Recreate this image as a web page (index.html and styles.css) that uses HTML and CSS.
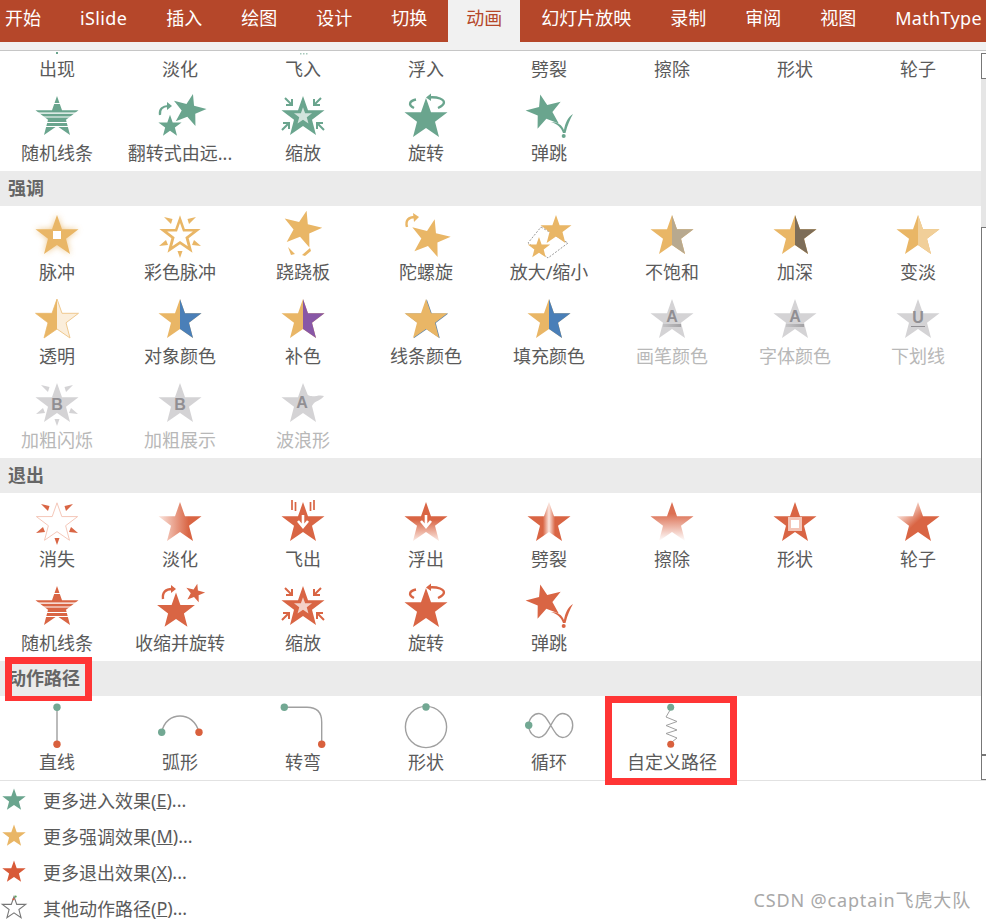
FILE: index.html
```html
<!DOCTYPE html>
<html lang="zh-CN">
<head>
    <meta charset="UTF-8">
    <title>动画</title>
    <link rel="stylesheet" href="styles.css">
</head>
<body>
<!-- shared shapes -->
<svg class="defs" aria-hidden="true">
    <defs>
        <path id="star" d="M22 1L27 15.3H43.5L31 24.8L35 40L22 31L9 40L13 24.8L.5 15.3H17Z"/>
        <clipPath id="rightHalf"><rect x="22" y="0" width="24" height="44"/></clipPath>
        <clipPath id="leftHalf"><rect x="0" y="0" width="22" height="44"/></clipPath>
        <linearGradient id="fadeX"><stop offset="0" stop-color="#fbe6df"/><stop offset=".7" stop-color="#d96544"/></linearGradient>
        <linearGradient id="fadeY" x2="0" y2="1"><stop offset=".3" stop-color="#dc7053"/><stop offset="1" stop-color="#fff"/></linearGradient>
        <linearGradient id="floatY" x2="0" y2="1"><stop offset=".45" stop-color="#d96544"/><stop offset="1" stop-color="#fbeae4"/></linearGradient>
        <linearGradient id="splitX"><stop offset=".36" stop-color="#d96544"/><stop offset=".5" stop-color="#fbe6df"/><stop offset=".64" stop-color="#d96544"/></linearGradient>
        <linearGradient id="wheel" x1="0" y1="0" x2="1" y2="1"><stop offset=".2" stop-color="#f8ddd4"/><stop offset=".5" stop-color="#d96544"/></linearGradient>
        <linearGradient id="barGrey"><stop offset="0" stop-color="#c4c3c5"/><stop offset="1" stop-color="#a3a2a5"/></linearGradient>
        <filter id="glow" x="-30%" y="-30%" width="160%" height="160%"><feGaussianBlur stdDeviation="3"/></filter>

        <g id="stripes">
            <use href="#star"/>
            <path d="M10 8.5H34M0 18.2H44M0 22H44M0 27.5H44M0 31.5H44" stroke="#fff" stroke-width="1.2"/>
        </g>
        <g id="squeeze">
            <use href="#star"/>
            <use href="#star" fill="#fff" fill-opacity=".7" transform="translate(22 21) scale(.42) translate(-22 -22)"/>
            <path d="M4 3L11 10M11 4V10H5M40 3L33 10M33 4V10H39M1 35L8 28M2 28H8V34M43 35L36 28M42 28H36V34" fill="none" stroke="currentColor" stroke-width="2"/>
        </g>
        <g id="spin">
            <use href="#star" transform="translate(0 2)"/>
            <path d="M12 4.5C5 6 4 10 10 13M34 13C41 10 42 6 36 3.5C32 2 28 2 24 2.5" fill="none" stroke="currentColor" stroke-width="2.4"/>
            <path d="M27 -1.5L22 2.5L27 6Z"/>
        </g>
        <g id="bounce">
            <use href="#star" transform="translate(17.5 16.5) rotate(-14) scale(.84) translate(-22 -22)"/>
            <path d="M24 27C31 27 35 30 37 35C38 28 41 22 46 19C43 24 40.5 30 38.5 38H36C34 32 30 29 24 27Z"/>
            <circle cx="36.7" cy="41" r="2"/>
        </g>
        <g id="ticks">
            <path d="M6 3L13 10L14.5 5ZM38 3L31 10L29.5 5ZM1 32L8 26L10 31ZM43 32L36 26L34 31ZM22 44L19.5 37H24.5Z"/>
        </g>
    </defs>
</svg>

<nav class="tabs">
    <a class="tab">开始</a>
    <a class="tab latin">iSlide</a>
    <a class="tab">插入</a>
    <a class="tab">绘图</a>
    <a class="tab">设计</a>
    <a class="tab">切换</a>
    <a class="tab active">动画</a>
    <a class="tab">幻灯片放映</a>
    <a class="tab">录制</a>
    <a class="tab">审阅</a>
    <a class="tab">视图</a>
    <a class="tab latin">MathType</a>
</nav>
<div class="strip"></div>

<div class="panel">
    <div class="gallery">
        <div class="gallery-inner">
            <!-- 进入 (scrolled partly out of view) -->
            <div class="grid green">
                <div class="item"><svg class="ico" viewBox="0 0 44 44"><rect x="21" y="41" width="2" height="2"/></svg><span>出现</span></div>
                <div class="item"><svg class="ico" viewBox="0 0 44 44"></svg><span>淡化</span></div>
                <div class="item"><svg class="ico" viewBox="0 0 44 44"><path d="M19 42h1.5v1.5H19zM22 42h1.5v1.5H22zM25 42h1.5v1.5H25z" opacity=".6"/></svg><span>飞入</span></div>
                <div class="item"><svg class="ico" viewBox="0 0 44 44"></svg><span>浮入</span></div>
                <div class="item"><svg class="ico" viewBox="0 0 44 44"></svg><span>劈裂</span></div>
                <div class="item"><svg class="ico" viewBox="0 0 44 44"></svg><span>擦除</span></div>
                <div class="item"><svg class="ico" viewBox="0 0 44 44"></svg><span>形状</span></div>
                <div class="item"><svg class="ico" viewBox="0 0 44 44"></svg><span>轮子</span></div>

                <div class="item"><svg class="ico" viewBox="0 0 44 44"><use href="#stripes"/></svg><span>随机线条</span></div>
                <div class="item"><svg class="ico" viewBox="0 0 44 44">
                    <use href="#star" transform="translate(31 15) rotate(14) scale(.78) translate(-22 -22)"/>
                    <use href="#star" transform="translate(12 31) scale(.54) translate(-22 -22)"/>
                    <path d="M2 20C1 14 5 11 10 11" fill="none" stroke="currentColor" stroke-width="2.2"/>
                    <path d="M9 7L14 11L9 15Z"/>
                </svg><span>翻转式由远...</span></div>
                <div class="item"><svg class="ico" viewBox="0 0 44 44"><use href="#squeeze"/></svg><span>缩放</span></div>
                <div class="item"><svg class="ico" viewBox="0 0 44 44"><use href="#spin"/></svg><span>旋转</span></div>
                <div class="item"><svg class="ico" viewBox="0 0 44 44"><use href="#bounce"/></svg><span>弹跳</span></div>
            </div>

            <h3 class="section-title">强调</h3>
            <div class="grid gold">
                <div class="item"><svg class="ico" viewBox="0 0 44 44">
                    <use href="#star" filter="url(#glow)" opacity=".75"/>
                    <use href="#star"/>
                    <rect x="18" y="17" width="8" height="8" fill="#fff"/>
                </svg><span>脉冲</span></div>
                <div class="item"><svg class="ico" viewBox="0 0 44 44">
                    <use href="#star" transform="translate(22 21.5) scale(.96) translate(-22 -22)"/>
                    <use href="#star" fill="#fff" transform="translate(22 21.5) scale(.6) translate(-22 -22)"/>
                    <use href="#ticks"/>
                </svg><span>彩色脉冲</span></div>
                <div class="item"><svg class="ico" viewBox="0 0 44 44">
                    <use href="#star" transform="translate(21 15) rotate(14) scale(.9) translate(-22 -22)"/>
                    <path d="M7 33L14 40L10 41ZM21 41L29 34L30 37L24 42Z"/>
                </svg><span>跷跷板</span></div>
                <div class="item"><svg class="ico" viewBox="0 0 44 44">
                    <use href="#star" transform="translate(26 24) rotate(14) scale(.92) translate(-22 -22)"/>
                    <path d="M3 13C1 6 5 3 11 3" fill="none" stroke="currentColor" stroke-width="2.4"/>
                    <path d="M9 -1L15 3L10 8Z"/>
                </svg><span>陀螺旋</span></div>
                <div class="item"><svg class="ico" viewBox="0 0 44 44">
                    <path d="M14 13L41 29L21 44L1 29Z" fill="none" stroke="#999" stroke-dasharray="2 1.5"/>
                    <use href="#star" transform="translate(29 16) scale(.72) translate(-22 -22)"/>
                    <use href="#star" transform="translate(12 34) scale(.52) translate(-22 -22)"/>
                </svg><span>放大/缩小</span></div>
                <div class="item"><svg class="ico" viewBox="0 0 44 44"><use href="#star"/><use href="#star" fill="#b8a98f" clip-path="url(#rightHalf)"/></svg><span>不饱和</span></div>
                <div class="item"><svg class="ico" viewBox="0 0 44 44"><use href="#star"/><use href="#star" fill="#7d6d58" clip-path="url(#rightHalf)"/></svg><span>加深</span></div>
                <div class="item"><svg class="ico" viewBox="0 0 44 44"><use href="#star"/><use href="#star" fill="#f1cf99" clip-path="url(#rightHalf)"/></svg><span>变淡</span></div>

                <div class="item"><svg class="ico" viewBox="0 0 44 44"><use href="#star" fill="#fbeedb" stroke="#efc98f"/><use href="#star" clip-path="url(#leftHalf)"/></svg><span>透明</span></div>
                <div class="item"><svg class="ico" viewBox="0 0 44 44"><use href="#star"/><use href="#star" fill="#4a7fb8" clip-path="url(#rightHalf)"/></svg><span>对象颜色</span></div>
                <div class="item"><svg class="ico" viewBox="0 0 44 44"><use href="#star"/><use href="#star" fill="#8857a6" clip-path="url(#rightHalf)"/></svg><span>补色</span></div>
                <div class="item"><svg class="ico" viewBox="0 0 44 44"><use href="#star" fill="#5f86ad" transform="translate(.8 .3)"/><use href="#star"/></svg><span>线条颜色</span></div>
                <div class="item"><svg class="ico" viewBox="0 0 44 44"><use href="#star"/><use href="#star" fill="#4a7fb8" clip-path="url(#rightHalf)"/></svg><span>填充颜色</span></div>
                <div class="item off"><svg class="ico" viewBox="0 0 44 44"><use href="#star"/><text class="ico-letter" x="22" y="24" text-anchor="middle">A</text><rect x="13" y="26" width="18" height="3" fill="url(#barGrey)"/></svg><span>画笔颜色</span></div>
                <div class="item off"><svg class="ico" viewBox="0 0 44 44"><use href="#star"/><text class="ico-letter" x="22" y="24" text-anchor="middle">A</text><rect x="13" y="26" width="18" height="3" fill="url(#barGrey)"/></svg><span>字体颜色</span></div>
                <div class="item off"><svg class="ico" viewBox="0 0 44 44"><use href="#star"/><text class="ico-letter" x="22" y="25" text-anchor="middle">U</text><rect x="15" y="28" width="14" height="1" fill="#918f93"/></svg><span>下划线</span></div>

                <div class="item off"><svg class="ico" viewBox="0 0 44 44"><use href="#star"/><use href="#ticks"/><text class="ico-letter" x="22" y="28" text-anchor="middle">B</text></svg><span>加粗闪烁</span></div>
                <div class="item off"><svg class="ico" viewBox="0 0 44 44"><use href="#star"/><text class="ico-letter" x="22" y="28" text-anchor="middle">B</text></svg><span>加粗展示</span></div>
                <div class="item off"><svg class="ico" viewBox="0 0 44 44"><path d="M22 1L26.8 13C32 16 38 12 43 14C40 19 34 18 31 24L35 40L22 31L9 40L13 24.8L.5 15.3H17Z"/><text class="ico-letter" x="21" y="26" text-anchor="middle">A</text></svg><span>波浪形</span></div>
            </div>

            <h3 class="section-title">退出</h3>
            <div class="grid red">
                <div class="item"><svg class="ico" viewBox="0 0 44 44"><use href="#star" fill="#fff" stroke="#f3c4b6" transform="translate(22 22) scale(.96) translate(-22 -22)"/><use href="#ticks"/></svg><span>消失</span></div>
                <div class="item"><svg class="ico" viewBox="0 0 44 44"><use href="#star" fill="url(#fadeX)"/></svg><span>淡化</span></div>
                <div class="item"><svg class="ico" viewBox="0 0 44 44">
                    <use href="#star"/>
                    <path d="M11 -1V9M14.5 1V10M29.5 1V10M33 -1V9" stroke="currentColor" stroke-width="1.7"/>
                    <path d="M22 14V25M17 20L22 26L27 20" fill="none" stroke="#fff" stroke-width="2.6"/>
                </svg><span>飞出</span></div>
                <div class="item"><svg class="ico" viewBox="0 0 44 44">
                    <use href="#star" fill="url(#floatY)"/>
                    <path d="M22 14V25M17 20L22 26L27 20" fill="none" stroke="#fff" stroke-width="2.6"/>
                </svg><span>浮出</span></div>
                <div class="item"><svg class="ico" viewBox="0 0 44 44"><use href="#star" fill="url(#splitX)"/></svg><span>劈裂</span></div>
                <div class="item"><svg class="ico" viewBox="0 0 44 44"><use href="#star" fill="url(#fadeY)"/></svg><span>擦除</span></div>
                <div class="item"><svg class="ico" viewBox="0 0 44 44"><use href="#star"/><rect x="15" y="16" width="14" height="14" fill="#f3c4b6"/><rect x="18" y="19" width="8" height="8" fill="#fff"/></svg><span>形状</span></div>
                <div class="item"><svg class="ico" viewBox="0 0 44 44"><use href="#star" fill="url(#wheel)"/></svg><span>轮子</span></div>

                <div class="item"><svg class="ico" viewBox="0 0 44 44"><use href="#stripes"/></svg><span>随机线条</span></div>
                <div class="item"><svg class="ico" viewBox="0 0 44 44">
                    <use href="#star" transform="translate(18 26) scale(.88) translate(-22 -22)"/>
                    <use href="#star" transform="translate(37 8) rotate(14) scale(.45) translate(-22 -22)"/>
                    <path d="M5 14C4 7 8 4 14 4" fill="none" stroke="currentColor" stroke-width="2.4"/>
                    <path d="M13 0L18 4L13 8Z"/>
                </svg><span>收缩并旋转</span></div>
                <div class="item"><svg class="ico" viewBox="0 0 44 44"><use href="#squeeze"/></svg><span>缩放</span></div>
                <div class="item"><svg class="ico" viewBox="0 0 44 44"><use href="#spin"/></svg><span>旋转</span></div>
                <div class="item"><svg class="ico" viewBox="0 0 44 44"><use href="#bounce"/></svg><span>弹跳</span></div>
            </div>

            <h3 class="section-title">动作路径</h3>
            <div class="grid">
                <div class="item"><svg class="ico" viewBox="0 0 44 44">
                    <path class="route thick" d="M22 3.3V40.3"/>
                    <circle class="dot-start" cx="22" cy="3.3" r="3.7"/><circle class="dot-end" cx="22" cy="40.3" r="3.7"/>
                </svg><span>直线</span></div>
                <div class="item"><svg class="ico" viewBox="0 0 44 44">
                    <path class="route" d="M3.7 28.3C6 17 14 12 22 12S38 17 41 28.3"/>
                    <circle class="dot-start" cx="3.7" cy="28.3" r="3.7"/><circle class="dot-end" cx="41" cy="28.3" r="3.7"/>
                </svg><span>弧形</span></div>
                <div class="item"><svg class="ico" viewBox="0 0 44 44">
                    <path class="route" d="M3.3 3.3H26Q40.7 3.3 40.7 18V40.3"/>
                    <circle class="dot-start" cx="3.3" cy="3.3" r="3.7"/><circle class="dot-end" cx="40.7" cy="40.3" r="3.7"/>
                </svg><span>转弯</span></div>
                <div class="item"><svg class="ico" viewBox="0 0 44 44">
                    <circle class="route" cx="22" cy="23" r="20.6"/>
                    <circle class="dot-start" cx="22" cy="3" r="3.7"/>
                </svg><span>形状</span></div>
                <div class="item"><svg class="ico" viewBox="0 0 44 44">
                    <path class="route" d="M1.7 21.3C1.7 14 7 9.5 12 9.5C17 9.5 20 15 23.7 21.3C27.4 27.6 30.5 33.5 35.5 33.5C41 33.5 45.7 28 45.7 21.3C45.7 14.6 41 9.5 35.5 9.5C30.5 9.5 27.4 15 23.7 21.3C20 27.6 17 33.5 12 33.5C7 33.5 1.7 28.6 1.7 21.3Z"/>
                    <circle class="dot-start" cx="1.7" cy="21.3" r="3.7"/>
                </svg><span>循环</span></div>
                <div class="item"><svg class="ico" viewBox="0 0 44 44">
                    <path class="route thin" d="M20.7 5L16 13L27 17.5L16 21.5L27 26L16 29.5L27 34L20.7 39"/>
                    <circle class="dot-start" cx="20.7" cy="3.3" r="3.5"/><circle class="dot-end" cx="20.7" cy="40.3" r="3.5"/>
                </svg><span>自定义路径</span></div>
            </div>
        </div>
    </div>

    <div class="scrollbar">
        <div class="sb-button"></div>
        <div class="sb-track"></div>
        <div class="sb-thumb"></div>
        <div class="sb-button last"></div>
    </div>
</div>

<ul class="menu">
    <li class="green"><svg class="menu-ico" viewBox="0 0 44 44"><use href="#star"/></svg>更多进入效果(<u>E</u>)...</li>
    <li class="gold"><svg class="menu-ico" viewBox="0 0 44 44"><use href="#star"/></svg>更多强调效果(<u>M</u>)...</li>
    <li class="red-strong"><svg class="menu-ico" viewBox="0 0 44 44"><use href="#star"/></svg>更多退出效果(<u>X</u>)...</li>
    <li><svg class="menu-ico" viewBox="0 0 44 44"><use href="#star" fill="#fff" stroke="#777" stroke-width="2"/><circle cx="25" cy="1" r="2" fill="#5aa55a"/><circle cx="21" cy="6" r="2" fill="#d85a38"/></svg>其他动作路径(<u>P</u>)...</li>
</ul>

<!-- annotation boxes drawn over the screenshot -->
<div class="mark mark-title"></div>
<div class="mark mark-custom"></div>
<div class="watermark">CSDN @captain飞虎大队</div>
</body>
</html>
```

FILE: styles.css
```css
html, body {
    margin: 0;
    height: 920px;
    overflow: hidden;
    background: #fff;
}
body {
    position: relative;
    font-family: "Noto Sans", "Noto Sans CJK SC", sans-serif;
    font-size: 18px;
    color: #5a5a5a;
}
.defs {
    position: absolute;
    width: 0;
    height: 0;
}

/* ribbon tabs */
.tabs {
    display: flex;
    height: 42px;
    background: #b5472a;
    white-space: nowrap;
}
.tab {
    padding: 0 18px;
    margin-left: 3px;
    line-height: 37px;
    color: #fff;
}
.tab:first-child {
    padding-left: 5px;
    margin-left: 0;
}
.tab.latin {
    letter-spacing: .35px;
}
.tab.active {
    background: #f1f1f1;
    color: #b5472a;
}
.strip {
    height: 8px;
    background: #f1f1f1;
    border-bottom: 1px solid #c6c6c6;
}

/* gallery */
.panel {
    display: flex;
    height: 729px;
    border-bottom: 1px solid #e2e2e2;
}
.gallery {
    width: 981px;
    overflow: hidden;
}
.gallery-inner {
    margin-top: -48px;
}
.grid {
    display: grid;
    grid-template-columns: repeat(8, 114px);
    grid-auto-rows: 84px;
    column-gap: 9px;
}
.item {
    display: flex;
    flex-direction: column;
    align-items: center;
    padding-top: 8px;
    white-space: nowrap;
}
.item span {
    margin-top: 2px;
    line-height: 24px;
    color: #5a5a5a;
}
.item.off {
    color: #d4d3d5;
}
.item.off span {
    color: #b8b8b8;
}
.ico {
    display: block;
    width: 44px;
    height: 44px;
    overflow: visible;
    fill: currentColor;
}
.ico-letter {
    font-family: "Liberation Sans", sans-serif;
    font-size: 16px;
    font-weight: bold;
    fill: #918f93;
}
.green { color: #6aa58e; }
.gold { color: #e9b666; }
.red { color: #d96544; }
.red-strong { color: #d85a38; }
.section-title {
    margin: 0;
    height: 35px;
    padding-left: 8px;
    background: #ebebeb;
    font-size: 18px;
    line-height: 34px;
    font-weight: bold;
    color: #666;
}

/* motion paths */
.route {
    fill: none;
    stroke: #a0a0a0;
    stroke-width: 1.4;
}
.route.thick {
    stroke: #bbb;
    stroke-width: 2;
}
.route.thin {
    stroke-width: 1;
}
.dot-start { fill: #72a893; }
.dot-end { fill: #d9603d; }

/* scrollbar */
.scrollbar {
    display: flex;
    flex-direction: column;
    width: 5px;
    padding-top: 2px;
}
.sb-button {
    height: 24px;
    border: 1px solid #777;
    border-right: 0;
}
.sb-button.last {
    height: 23px;
    border-top-width: 2px;
}
.sb-track {
    height: 148px;
    background: #e6e6e6;
}
.sb-thumb {
    height: 526px;
    border: solid #777;
    border-width: 1px 0 0 1px;
}

/* menu */
.menu {
    list-style: none;
    margin: 0;
    padding: 1px 0 0;
}
.menu li {
    display: flex;
    align-items: center;
    height: 36px;
    padding-left: 2px;
    color: #5a5a5a;
    white-space: pre;
}
.menu-ico {
    width: 24px;
    height: 24px;
    margin-right: 17px;
    flex: none;
    overflow: visible;
}
.menu li.green .menu-ico { fill: #6aa58e; }
.menu li.gold .menu-ico { fill: #e9b666; }
.menu li.red-strong .menu-ico { fill: #d85a38; }

/* red annotation boxes */
.mark {
    position: absolute;
    box-sizing: border-box;
    border: 7px solid #ff3535;
}
.mark-title {
    left: 5px;
    top: 657px;
    width: 87px;
    height: 44px;
    border-width: 7px 7px 5px;
}
.mark-custom {
    left: 605px;
    top: 696px;
    width: 132px;
    height: 89px;
}
.watermark {
    position: absolute;
    right: 15px;
    top: 887px;
    line-height: 26px;
    letter-spacing: .85px;
    color: #a8a8a8;
    white-space: nowrap;
}
```
